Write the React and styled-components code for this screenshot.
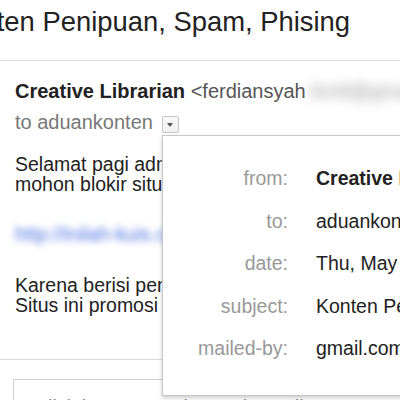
import React from "react";
import styled, { createGlobalStyle } from "styled-components";

const Global = createGlobalStyle`
  html, body { margin: 0; padding: 0; background: #fff; }
  body { font-family: "Liberation Sans", Arial, sans-serif; }
`;

const Page = styled.div`
  position: relative;
  width: 400px;
  height: 400px;
  overflow: hidden;
  background: #fff;
  font-family: "Liberation Sans", Arial, sans-serif;
  font-size: 19.5px;
  color: #222;
`;

const TitleBar = styled.div`
  height: 60px;
  border-bottom: 1px solid #dcdcdc;
  box-sizing: content-box;
  overflow: hidden;
`;

const Title = styled.h1`
  margin: 0 0 0 -52px;
  padding-top: 7px;
  font-size: 27.4px;
  line-height: 30px;
  font-weight: normal;
  color: #222;
  white-space: nowrap;
`;

const Header = styled.div`
  padding: 19px 0 0 15px;
  display: flex;
  flex-direction: column;
  gap: 9px;
  font-size: 20px;
`;

const NameRow = styled.div`
  line-height: 22px;
  white-space: nowrap;
`;

const Name = styled.span`
  font-weight: bold;
  color: #222;
`;

const Addr = styled.span`
  color: #555;
`;

const Blurred = styled.span`
  display: inline-block;
  color: ${(p) => p.$color || "#999"};
  filter: blur(${(p) => p.$amount || 4}px);
`;

const ToRow = styled.div`
  display: flex;
  align-items: center;
  line-height: 22px;
  color: #777;
  white-space: nowrap;
`;

const DropButton = styled.span`
  box-sizing: border-box;
  width: 17px;
  height: 17px;
  margin: 4px 0 0 9px;
  border: 1px solid #c6c6c6;
  border-radius: 2px;
  background: linear-gradient(#f8f8f8, #f1f1f1);
  display: flex;
  align-items: center;
  justify-content: center;
  &::after {
    content: "";
    border-left: 3.5px solid transparent;
    border-right: 3.5px solid transparent;
    border-top: 4px solid #555;
    margin-top: 1px;
  }
`;

const Body = styled.div`
  padding: 21px 0 0 15px;
`;

const Para = styled.p`
  margin: ${(p) => p.$mt || 0}px 0 0;
  line-height: 20px;
  white-space: nowrap;
  color: #222;
`;

const Link = styled.span`
  color: #4a6fe0;
`;

const Divider = styled.div`
  margin-top: 44px;
  border-top: 1px solid #dcdcdc;
`;

const ReplyBox = styled.div`
  margin: 19px 0 0 13px;
  border: 1px solid #cfcfcf;
  border-right: none;
  padding: 16px 0 0 20px;
  line-height: 22px;
  color: #888;
  white-space: nowrap;
  height: 40px;
`;

const Popup = styled.div`
  position: absolute;
  left: 162px;
  top: 135px;
  width: 300px;
  box-sizing: border-box;
  padding: 31px 0 36px;
  background: #fff;
  border: 1px solid rgba(0, 0, 0, 0.22);
  box-shadow: 0 2px 4px rgba(0, 0, 0, 0.2);
  display: grid;
  grid-template-columns: 125px 1fr;
  column-gap: 28px;
  row-gap: 20.5px;
  line-height: 22px;
  white-space: nowrap;
`;

const Label = styled.div`
  text-align: right;
  color: #999;
`;

const Value = styled.div`
  color: #222;
  font-weight: ${(p) => (p.$bold ? "bold" : "normal")};
`;

const rows = [
  { label: "from:", value: "Creative Librarian", bold: true },
  { label: "to:", value: "aduankonten@kominfo.go.id" },
  { label: "date:", value: "Thu, May 19, 2016 at 9:12 AM" },
  { label: "subject:", value: "Konten Penipuan, Spam, Phising" },
  { label: "mailed-by:", value: "gmail.com" },
];

export default function App() {
  return (
    <>
      <Global />
      <Page>
        <TitleBar>
          <Title>Konten Penipuan, Spam, Phising</Title>
        </TitleBar>
        <Header>
          <NameRow>
            <Name>Creative Librarian</Name> <Addr>&lt;ferdiansyah</Addr>
            <Blurred $amount={6}>.ferdi@gmail.com&gt;</Blurred>
          </NameRow>
          <ToRow>
            to aduankonten
            <DropButton />
          </ToRow>
        </Header>
        <Body>
          <Para>
            Selamat pagi admin,
            <br />
            mohon blokir situs berikut:
          </Para>
          <Para $mt={30}>
            <Blurred $amount={3.5} $color="#4a6fe0">
              <Link>http://inilah-kuis.com/</Link>
            </Blurred>
          </Para>
          <Para $mt={31}>
            Karena berisi penipuan berhadiah.
            <br />
            Situs ini promosi melalui SMS.
          </Para>
        </Body>
        <Divider />
        <ReplyBox>Click here to Reply, Reply to all, or Forward</ReplyBox>
        <Popup>
          {rows.map((r) => (
            <React.Fragment key={r.label}>
              <Label>{r.label}</Label>
              <Value $bold={r.bold}>{r.value}</Value>
            </React.Fragment>
          ))}
        </Popup>
      </Page>
    </>
  );
}
